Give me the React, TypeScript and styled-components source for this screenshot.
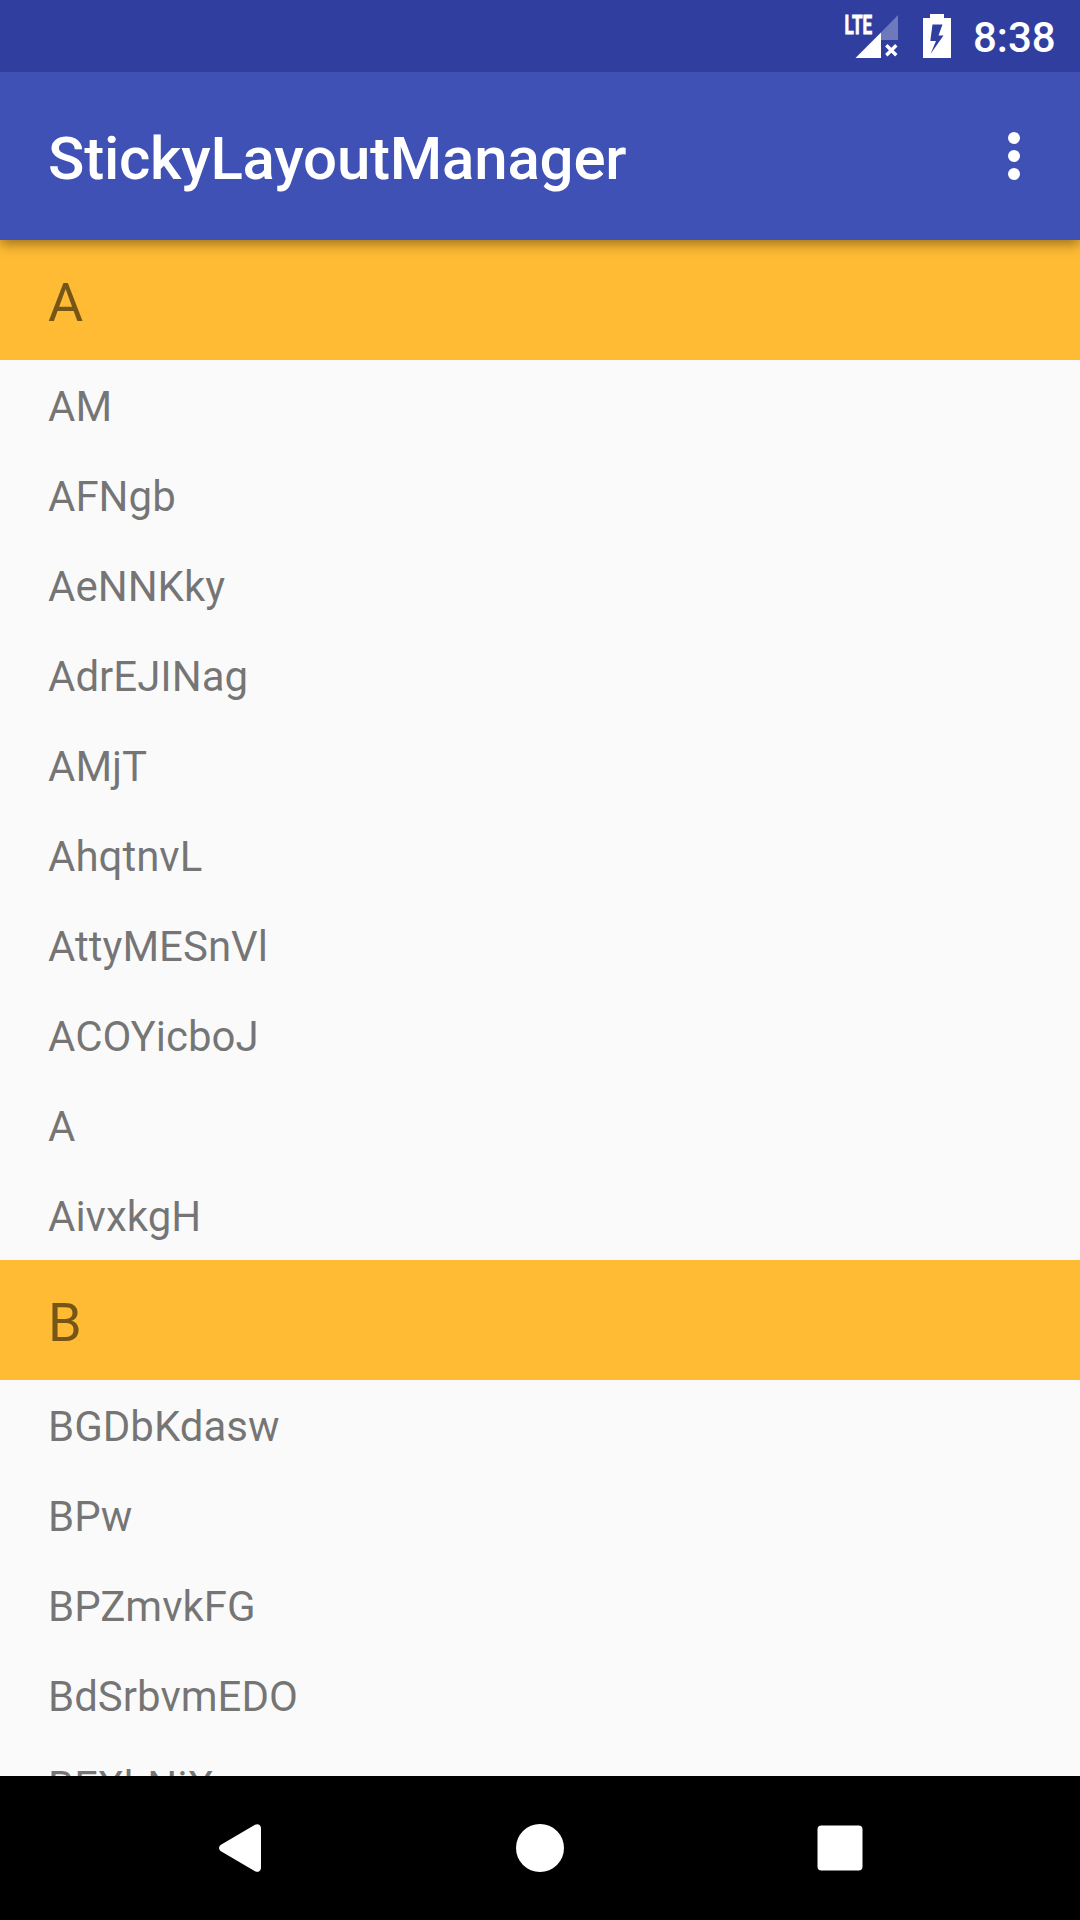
import React from 'react';
import styled, { createGlobalStyle } from 'styled-components';

const GlobalStyle = createGlobalStyle`
  body { margin: 0; background: #fafafa; }
  * { box-sizing: border-box; }
`;

const Screen = styled.div`
  width: 1080px;
  height: 1920px;
  display: flex;
  flex-direction: column;
  overflow: hidden;
  background: #fafafa;
  font-family: Roboto, 'Noto Sans', sans-serif;
`;

const StatusBar = styled.header`
  flex: none;
  z-index: 2;
  height: 72px;
  display: flex;
  justify-content: flex-end;
  align-items: flex-start;
  padding-right: 24px;
  background: #303f9f;
  color: #fff;
`;

const StatusIcon = styled.svg<{ $gap: number }>`
  display: block;
  flex: none;
  margin-right: ${(p) => p.$gap}px;
`;

const Clock = styled.time`
  width: 83px;
  padding-top: 13px;
  font-size: 42px;
  line-height: 49px;
  font-weight: 500;
  white-space: nowrap;
`;

const Toolbar = styled.div`
  flex: none;
  z-index: 1;
  height: 168px;
  display: flex;
  justify-content: space-between;
  padding: 51px 60px 0 48px;
  background: #3f51b5;
  color: #fff;
  box-shadow: 0 4px 12px rgba(0, 0, 0, 0.4);
`;

const Title = styled.h1`
  margin: 0;
  padding-top: 1px;
  font-size: 60px;
  line-height: 70px;
  font-weight: 500;
  letter-spacing: -0.2px;
`;

const MenuButton = styled.button`
  width: 12px;
  height: 48px;
  margin-top: 9px;
  padding: 0;
  border: 0;
  background: none;
  display: flex;
  flex-direction: column;
  gap: 6px;
`;

const Dot = styled.span`
  width: 12px;
  height: 12px;
  border-radius: 50%;
  background: #fff;
`;

const List = styled.main`
  flex: 1;
  min-height: 0;
  overflow: hidden;
`;

const SectionHeader = styled.h2`
  margin: 0;
  height: 120px;
  padding: 31px 48px 0;
  background: #ffbb33;
  color: rgba(0, 0, 0, 0.54);
  font-size: 54px;
  line-height: 63px;
  font-weight: 400;
`;

const Row = styled.div`
  height: 90px;
  padding: 22px 48px 0;
  color: rgba(0, 0, 0, 0.54);
  font-size: 42px;
  line-height: 49px;
`;

const NavBar = styled.nav`
  flex: none;
  height: 144px;
  display: flex;
  justify-content: center;
  background: #000;
`;

const NavButton = styled.button`
  width: 300px;
  height: 144px;
  padding: 0;
  border: 0;
  background: none;
  display: flex;
  align-items: center;
  justify-content: center;
`;

const sections = [
  {
    letter: 'A',
    rows: ['AM', 'AFNgb', 'AeNNKky', 'AdrEJINag', 'AMjT', 'AhqtnvL', 'AttyMESnVl', 'ACOYicboJ', 'A', 'AivxkgH'],
  },
  { letter: 'B', rows: ['BGDbKdasw', 'BPw', 'BPZmvkFG', 'BdSrbvmEDO', 'BFXbNiX'] },
];

const SignalIcon = () => (
  <StatusIcon width="60" height="72" viewBox="840 0 60 72" $gap={22}>
    <path d="M898 15V40H881V32.5Z" fill="#fff" fillOpacity="0.3" />
    <path d="M881 32.5V58H855.5Z" fill="#fff" />
    <path d="M886.3 45.3L896.3 55.3M896.3 45.3L886.3 55.3" stroke="#fff" strokeWidth="3.4" />
    <text
      x="844.6"
      y="33.5"
      fill="#fff"
      stroke="#fff"
      strokeWidth="0.8"
      fontFamily="Roboto, sans-serif"
      fontWeight="700"
      fontSize="26"
      textLength="27.5"
      lengthAdjust="spacingAndGlyphs"
    >
      LTE
    </text>
  </StatusIcon>
);

const BatteryIcon = () => (
  <StatusIcon width="30" height="72" viewBox="922 0 30 72" $gap={21}>
    <path
      fillRule="evenodd"
      fill="#fff"
      d="M930 14H944V18H951V58H923V18H930ZM932.5 24.5L930.3 41H936L930.5 54L943.5 35.5H938.5L942.5 24.5Z"
    />
  </StatusIcon>
);

export default function App() {
  return (
    <Screen>
      <GlobalStyle />
      <StatusBar>
        <SignalIcon />
        <BatteryIcon />
        <Clock>8:38</Clock>
      </StatusBar>
      <Toolbar>
        <Title>StickyLayoutManager</Title>
        <MenuButton aria-label="More options">
          <Dot />
          <Dot />
          <Dot />
        </MenuButton>
      </Toolbar>
      <List>
        {sections.map((s) => (
          <section key={s.letter}>
            <SectionHeader>{s.letter}</SectionHeader>
            {s.rows.map((r) => (
              <Row key={r}>{r}</Row>
            ))}
          </section>
        ))}
      </List>
      <NavBar>
        <NavButton aria-label="Back">
          <svg width="60" height="60" viewBox="210 1818 60 60">
            <path
              fill="#fff"
              d="M220.5 1845L255 1824.800Q257.500 1823.500 259.300 1824.800Q261 1826 261 1828V1868Q261 1870 259.300 1871.200Q257.500 1872.500 255 1871.200L220.500 1851Q217.500 1848 220.500 1845Z"
            />
          </svg>
        </NavButton>
        <NavButton aria-label="Home">
          <svg width="48" height="48">
            <circle cx="24" cy="24" r="24" fill="#fff" />
          </svg>
        </NavButton>
        <NavButton aria-label="Overview">
          <svg width="46" height="46">
            <rect x="0.5" y="0.5" width="45" height="45" rx="4" fill="#fff" />
          </svg>
        </NavButton>
      </NavBar>
    </Screen>
  );
}
